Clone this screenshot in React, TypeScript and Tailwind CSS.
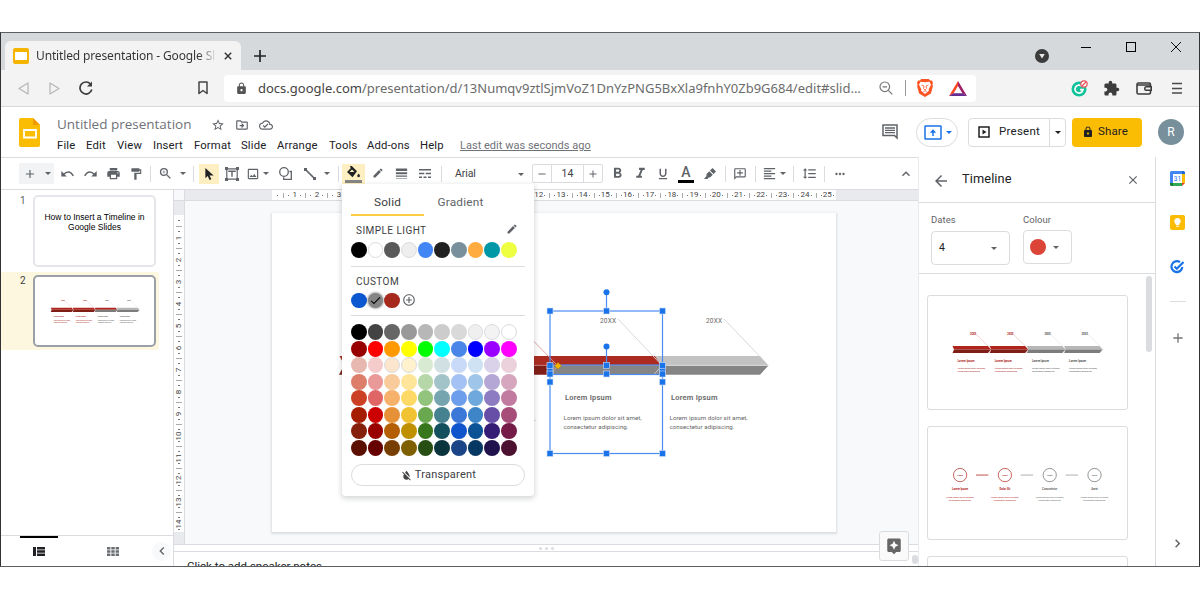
import React from 'react';
import clsx from 'clsx';
import {
    MdAdd,
    MdArrowBack,
    MdAssistant,
    MdCheck,
    MdChevronLeft,
    MdChevronRight,
    MdClose,
    MdEdit,
    MdExtension,
    MdFormatAlignLeft,
    MdFormatBold,
    MdFormatColorReset,
    MdFormatItalic,
    MdFormatLineSpacing,
    MdFormatPaint,
    MdFormatUnderlined,
    MdKeyboardArrowUp,
    MdLightbulb,
    MdLineWeight,
    MdLock,
    MdMoreHoriz,
    MdOutlineAddComment,
    MdOutlineCloudDone,
    MdOutlineDriveFileMove,
    MdOutlineImage,
    MdPrint,
    MdRemove,
    MdStarBorder,
    MdZoomIn,
    MdAddCircleOutline,
} from 'react-icons/md';

type CellProps = { className?: string; children?: React.ReactNode };

// Fixed width slot that centres its icon
function Cell({ className, children }: CellProps) {
    return <div className={clsx('flex shrink-0 items-center justify-center', className)}>{children}</div>;
}

function Divider({ className }: { className: string }) {
    return (
        <Cell className={className}>
            <div className="h-4 w-px bg-[#dadce0]" />
        </Cell>
    );
}

function Caret({ className = 'border-t-[#5f6368]' }: { className?: string }) {
    return <div className={clsx('h-0 w-0 shrink-0 border-x-[3px] border-t-[3px] border-x-transparent', className)} />;
}

/* ---------- Browser chrome ---------- */

function TabStrip() {
    return (
        <div className="flex h-[37px] shrink-0 items-end bg-[#d5d9dc] pl-1 font-['Noto_Sans',sans-serif]">
            <div className="flex h-[29px] w-[236px] items-center rounded-t-md bg-[#f3f3f3] pl-2">
                <div className="flex h-[16px] w-[16px] items-center justify-center rounded-[2px] bg-[#f5b400]">
                    <div className="h-2 w-3 bg-white" />
                </div>
                <div className="ml-[7px] w-[180px] overflow-hidden bg-gradient-to-r from-[#333] from-90% to-[#eee] bg-clip-text text-[12px] tracking-[-0.14px] whitespace-nowrap text-transparent">
                    Untitled presentation - Google Slides
                </div>
                <svg viewBox="0 0 10 10" className="ml-[8px] h-[8px] w-[8px]" stroke="#333" strokeWidth="1.8">
                    <path d="M1 1l8 8M9 1l-8 8" />
                </svg>
            </div>
            <Cell className="h-[29px] w-[38px]">
                <svg viewBox="0 0 12 12" className="h-3 w-3" stroke="#222" strokeWidth="1.7">
                    <path d="M6 0v12M0 6h12" />
                </svg>
            </Cell>
            <div className="flex-1" />
            <Cell className="h-[29px] w-7">
                <svg viewBox="0 0 14 14" className="h-[14px] w-[14px]">
                    <circle cx="7" cy="7" r="7" fill="#3c3c3c" />
                    <path d="M4.2 5h5.6L7 9.6z" fill="#e8e8e8" />
                </svg>
            </Cell>
            <div className="flex h-full w-[143px] items-start pt-2">
                <Cell className="h-3 w-[60px]">
                    <div className="h-px w-[10px] bg-black" />
                </Cell>
                <Cell className="h-3 w-[30px]">
                    <div className="h-[10px] w-[10px] border border-black" />
                </Cell>
                <Cell className="h-3 w-[60px]">
                    <svg viewBox="0 0 10 10" className="h-[10px] w-[10px]" stroke="#111" strokeWidth="1">
                        <path d="M0 0l10 10M10 0L0 10" />
                    </svg>
                </Cell>
            </div>
        </div>
    );
}

function AddressBar() {
    return (
        <div className="flex h-[37px] shrink-0 items-center border-b border-[#d6d8da] bg-[#f3f3f3] font-['Noto_Sans',sans-serif]">
            <Cell className="ml-[10px] w-6">
                <svg viewBox="0 0 11 13" className="h-[13px] w-[11px]" fill="none" stroke="#b5b5b5" strokeWidth="1.2">
                    <path d="M10 1v11L1 6.500z" strokeLinejoin="round" />
                </svg>
            </Cell>
            <Cell className="ml-[7px] w-6">
                <svg viewBox="0 0 11 13" className="h-[13px] w-[11px]" fill="none" stroke="#b5b5b5" strokeWidth="1.2">
                    <path d="M1 1v11l9-5.500z" strokeLinejoin="round" />
                </svg>
            </Cell>
            <Cell className="ml-[8px] w-6">
                <svg viewBox="0 0 14 14" className="h-[14px] w-[14px]" fill="none" stroke="#3c3c3c" strokeWidth="1.7">
                    <path d="M11.500 3A6 6 0 1 0 12.800 8.600" />
                    <path d="M13 0.500v5H8z" fill="#3c3c3c" stroke="none" />
                </svg>
            </Cell>
            <Cell className="ml-[93px] w-6">
                <svg viewBox="0 0 10 14" className="h-[14px] w-[10px]" fill="none" stroke="#444" strokeWidth="1.5">
                    <path d="M1 1h8v11.500L5 9.500l-4 3z" strokeLinejoin="round" />
                </svg>
            </Cell>
            <div className="ml-[9px] flex h-[27px] w-[752px] items-center rounded bg-white">
                <Cell className="ml-[9px] w-4">
                    <MdLock className="text-[13px] text-[#555]" />
                </Cell>
                <div className="mt-[2px] ml-[9px] w-[609px] text-[13px] whitespace-nowrap text-[#6b6b6b]">
                    <span className="text-[#444]">docs.google.com</span>
                    /presentation/d/13Numqv9ztlSjmVoZ1DnYzPNG5BxXla9fnhY0Zb9G684/edit#slid...
                </div>
                <Cell className="ml-[9px] w-5">
                    <svg viewBox="0 0 14 14" className="h-[14px] w-[14px]" fill="none" stroke="#777" strokeWidth="1.200">
                        <circle cx="5.800" cy="5.800" r="4.800" />
                        <path d="M9.300 9.300l4 4M3.600 5.800h4.400" />
                    </svg>
                </Cell>
                <div className="ml-[9px] h-4 w-px bg-[#999]" />
                <Cell className="ml-[9px] w-5">
                    <svg viewBox="0 0 16 18" className="h-[18px] w-4">
                        <path d="M4.300 0h7.400l1.400 1.600 1.900-.2 1 2.600-.6 1.500.5 1.700-2 7.200L8 18l-5.900-3.600-2-7.200.5-1.700L0 4l1-2.600 1.900.2z" fill="#fb5422" />
                        <path d="M8 3.200l4.500-.4 1.500 3-2.300 4.500.2 1.500L8 15l-3.900-3.200.2-1.500L2 5.800l1.500-3z" fill="#fff" />
                        <path d="M4.500 6l2.500 1-.5 2.500L8 11l1.500-1.500L9 7l2.500-1M6.500 12.500l1.500-.8 1.500.8" fill="none" stroke="#fb5422" strokeWidth="0.800" />
                    </svg>
                </Cell>
                <Cell className="ml-[13px] w-5">
                    <svg viewBox="0 0 18 15" className="h-[15px] w-[18px]">
                        <path d="M9 0L0 15l4.500-2.600L9 5z" fill="#ff4724" />
                        <path d="M9 0l9 15-4.500-2.600L9 5z" fill="#9e1f63" />
                        <path d="M0 15h18l-4.500-2.800h-9z" fill="#662d91" />
                    </svg>
                </Cell>
            </div>
            <div className="flex-1" />
            <div className="flex w-[134px] items-center">
                <Cell className="w-7">
                    <svg viewBox="0 0 17 17" className="h-[17px] w-[17px]">
                        <circle cx="8" cy="9" r="7.500" fill="#11c39a" />
                        <path d="M10.800 6.200A4 4 0 1 0 12 9.600H9" fill="none" stroke="#fff" strokeWidth="1.600" />
                        <circle cx="13" cy="4" r="3.200" fill="#fff" stroke="#e8505b" strokeWidth="1.200" />
                        <path d="M11 6l4-4" stroke="#e8505b" strokeWidth="1.200" />
                    </svg>
                </Cell>
                <Cell className="ml-[4px] w-7">
                    <MdExtension className="mt-px text-[17px] text-[#3c3c3c]" />
                </Cell>
                <Cell className="ml-[5px] w-7">
                    <svg viewBox="0 0 16 13" className="h-[13px] w-4" fill="none" stroke="#3c3c3c" strokeWidth="1.600">
                        <path d="M14.500 4V2.500Q14.500 1 13 1H2.500Q1 1 1 2.500v8Q1 12 2.500 12H13q1.500 0 1.500-1.500V9" />
                        <path d="M1 3h13M15.200 4.700H10q-1.200 0-1.200 1.800T10 8.300h5.200z" />
                    </svg>
                </Cell>
                <Cell className="ml-[5px] w-7">
                    <svg viewBox="0 0 10 12" className="h-3 w-[10px]" stroke="#4a4a4a" strokeWidth="1.300">
                        <path d="M0 1.500h10M0 6.500h10M0 11h10" />
                    </svg>
                </Cell>
            </div>
        </div>
    );
}

/* ---------- Document header ---------- */

const menus = [
    { label: 'File', width: 'w-[29px]' },
    { label: 'Edit', width: 'w-[31px]' },
    { label: 'View', width: 'w-[36px]' },
    { label: 'Insert', width: 'w-[41px]' },
    { label: 'Format', width: 'w-[47px]' },
    { label: 'Slide', width: 'w-[36px]' },
    { label: 'Arrange', width: 'w-[52px]' },
    { label: 'Tools', width: 'w-[38px]' },
    { label: 'Add-ons', width: 'w-[53px]' },
    { label: 'Help', width: 'w-[40px]' },
];

function Header() {
    return (
        <div className="flex h-[50px] shrink-0 bg-white">
            <Cell className="ml-[17px] w-[22px]">
                <svg viewBox="0 0 21 29" className="h-[29px] w-[21px]">
                    <path d="M2 0h12l7 7v20q0 2-2 2H2q-2 0-2-2V2q0-2 2-2z" fill="#fbbc04" />
                    <path d="M14 0l7 7h-7z" fill="#f29900" />
                    <path d="M5 12h12v7.500H5z" fill="none" stroke="#fff" strokeWidth="1.800" />
                </svg>
            </Cell>
            <div className="ml-[17px] flex-1">
                <div className="flex h-[30px] items-center pt-[5px]">
                    <div className="w-[150px] font-['Open_Sans',sans-serif] text-[13.5px] whitespace-nowrap text-[#6f7378]">Untitled presentation</div>
                    <Cell className="w-[22px]">
                        <MdStarBorder className="text-[14px] text-[#5f6368]" />
                    </Cell>
                    <Cell className="ml-[2px] w-[22px]">
                        <MdOutlineDriveFileMove className="text-[14px] text-[#5f6368]" />
                    </Cell>
                    <Cell className="ml-[2px] w-[22px]">
                        <MdOutlineCloudDone className="text-[14px] text-[#5f6368]" />
                    </Cell>
                </div>
                <div className="flex h-[19px] items-center text-[11.300px] tracking-[0.15px] whitespace-nowrap text-[#202124]">
                    {menus.map((menu) => (
                        <div key={menu.label} className={menu.width}>
                            {menu.label}
                        </div>
                    ))}
                    <div className="text-[11px] tracking-[0.020px] text-[#6f7378] underline">Last edit was seconds ago</div>
                </div>
            </div>
            <Cell className="w-9">
                <svg viewBox="0 0 16 16" className="h-4 w-4" fill="none" stroke="#5f6368" strokeWidth="1.500">
                    <path d="M1 1h14v13l-2.500-2.500H1z" />
                    <path d="M3 4h10M3 6.300h10M3 8.600h10" strokeWidth="1.300" />
                </svg>
            </Cell>
            <div className="ml-2 flex items-center">
                <div className="flex h-[29px] w-[42px] items-center justify-center gap-1 rounded-full border border-[#dadce0] pl-1">
                    <svg viewBox="0 0 18 15" className="h-[15px] w-[18px] shrink-0" fill="none" stroke="#1a73e8" strokeWidth="1.500">
                        <rect x="1" y="1" width="16" height="13" rx="0.500" />
                        <path d="M9 11V5" />
                        <path d="M5.800 7.800L9 4.300l3.200 3.500z" fill="#1a73e8" stroke="none" />
                    </svg>
                    <Caret className="mr-[2px] border-t-[#1a73e8]" />
                </div>
                <div className="ml-[10px] flex h-[29px] w-[98px] items-center rounded border border-[#dadce0] text-[11.500px] text-[#202124]">
                    <svg viewBox="0 0 12 12" className="ml-[9px] h-3 w-3" fill="none" stroke="#202124" strokeWidth="1.500">
                        <rect x="1" y="1" width="10" height="10" />
                        <path d="M4.500 3.500v5l4-2.500z" fill="#202124" stroke="none" />
                    </svg>
                    <div className="ml-[9px] w-[50px] tracking-[0.25px]">Present</div>
                    <div className="flex h-full flex-1 items-center justify-center border-l border-[#dadce0]">
                        <Caret className="border-t-[#202124]" />
                    </div>
                </div>
                <div className="ml-[6px] flex h-[29px] w-[70px] items-center rounded bg-[#fbbc04] text-[11.500px] text-[#202124]">
                    <MdLock className="ml-[10px] text-[12px]" />
                    <div className="ml-[4px] tracking-[0.15px]">Share</div>
                </div>
                <div className="mr-[15px] ml-4 flex h-[26px] w-[26px] items-center justify-center rounded-full bg-[#78909c] text-[12px] text-white">R</div>
            </div>
        </div>
    );
}

/* ---------- Toolbar ---------- */

function Toolbar() {
    return (
        <div className="flex h-[33px] shrink-0 items-center border-y border-[#dadce0] bg-white text-[15px] text-[#5f6368]">
            <div className="ml-[18px] flex h-[21px] w-[35px] items-center bg-[#f1f3f4]">
                <Cell className="w-[22px]">
                    <MdAdd className="text-[14px]" />
                </Cell>
                <Cell className="w-[13px]">
                    <Caret />
                </Cell>
            </div>
            <Cell className="ml-[2px] w-[23px]">
                <svg viewBox="0 0 13 8" className="h-2 w-[13px]" fill="none" stroke="#5f6368" strokeWidth="1.500">
                    <path d="M2.500 4.300Q8.500-1 12.300 5.800" />
                    <path d="M0.300 1v5.500h5.500z" fill="#5f6368" stroke="none" />
                </svg>
            </Cell>
            <Cell className="w-[23px]">
                <svg viewBox="0 0 13 8" className="h-2 w-[13px]" fill="none" stroke="#5f6368" strokeWidth="1.500">
                    <path d="M10.500 4.300Q4.500-1 0.700 5.800" />
                    <path d="M12.700 1v5.500H7.200z" fill="#5f6368" stroke="none" />
                </svg>
            </Cell>
            <Cell className="w-[22px]">
                <MdPrint />
            </Cell>
            <Cell className="w-6">
                <MdFormatPaint className="text-[14px]" />
            </Cell>
            <Divider className="w-1" />
            <Cell className="w-[26px]">
                <MdZoomIn />
            </Cell>
            <Cell className="w-[10px]">
                <Caret />
            </Cell>
            <Divider className="w-[11px]" />
            <Cell className="h-5 w-5 bg-[#feefc3]">
                <svg viewBox="0 0 9 13" className="h-[12px] w-[9px]" fill="#202124">
                    <path d="M0 0v11l2.600-2.300L4.500 13l2-.9-1.900-4L9 8z" />
                </svg>
            </Cell>
            <Cell className="w-[25px]">
                <svg viewBox="0 0 14 14" className="h-[14px] w-[14px]" fill="none" stroke="#5f6368" strokeWidth="1.200">
                    <path d="M1.800 1.800h10.400v10.400H1.800z" />
                    <path d="M4 5V4.300h6V5M7 4.300v5.500" strokeWidth="1.400" />
                    <path d="M0 0h3v3H0zM11 0h3v3h-3zM0 11h3v3H0zM11 11h3v3h-3z" fill="#5f6368" stroke="none" />
                </svg>
            </Cell>
            <Cell className="w-[18px]">
                <MdOutlineImage className="text-[14px]" />
            </Cell>
            <Cell className="w-2">
                <Caret />
            </Cell>
            <Cell className="w-[30px]">
                <svg viewBox="0 0 13 13" className="h-[13px] w-[13px]" fill="none" stroke="#5f6368" strokeWidth="1.300">
                    <circle cx="5" cy="5" r="4.300" />
                    <path d="M10.500 4.500h1.800v7.800H4.700v-2" />
                </svg>
            </Cell>
            <Cell className="w-5">
                <svg viewBox="0 0 12 12" className="h-3 w-3" stroke="#5f6368" strokeWidth="1.700">
                    <path d="M1.500 1.500l9 9" />
                    <path d="M0 0h3v3H0zM9 9h3v3H9z" fill="#5f6368" stroke="none" />
                </svg>
            </Cell>
            <Cell className="w-[14px]">
                <Caret />
            </Cell>
            <Divider className="w-2" />
            <Cell className="h-5 w-[23px] flex-col bg-[#feefc3]">
                <svg viewBox="0 0 13 12" className="mt-px h-3 w-[13px]" fill="#202124">
                    <path d="M3 0l1-.8 6 6L5.500 11.200 0 6l3.700-3.800zM11.600 7.500q1.400 1.700 1.400 2.500t-1.400 1.200Q10.200 10.800 10.200 10t1.400-2.500z" />
                    <path d="M5 3.500L2.500 6h5z" fill="#feefc3" />
                </svg>
                <div className="mt-[2px] h-[3px] w-[17px] bg-[#858585]" />
            </Cell>
            <Cell className="w-[26px]">
                <MdEdit className="mb-[2px] text-[12px]" />
            </Cell>
            <Cell className="w-5">
                <MdLineWeight />
            </Cell>
            <Cell className="w-7">
                <svg viewBox="0 0 12 9" className="h-[9px] w-3" fill="#5f6368">
                    <path d="M0 0h12v1.500H0zM0 3.800h5.300v1.500H0zM6.700 3.800H12v1.500H6.700zM0 7.500h3V9H0zM4.500 7.500h3V9h-3zM9 7.500h3V9H9z" />
                </svg>
            </Cell>
            <Divider className="w-[5px]" />
            <div className="flex w-[88px] items-center justify-between pt-px pr-2 pl-[11px] text-[10.500px] text-[#3c4043]">
                <span className="tracking-[-0.1px]">Arial</span>
                <Caret />
            </div>
            <div className="flex h-[19px] w-[71px] items-center rounded-[2px] border border-[#dadce0]">
                <Cell className="w-[18px]">
                    <MdRemove className="text-[12px]" />
                </Cell>
                <Cell className="h-full w-[33px] border-x border-[#dadce0] pt-px text-[10.500px] text-[#3c4043]">14</Cell>
                <Cell className="w-[18px]">
                    <MdAdd className="text-[12px]" />
                </Cell>
            </div>
            <Cell className="w-7">
                <MdFormatBold className="text-[17px]" />
            </Cell>
            <Cell className="w-[18px]">
                <MdFormatItalic className="text-[17px]" />
            </Cell>
            <Cell className="w-7">
                <MdFormatUnderlined className="mt-px text-[14px]" />
            </Cell>
            <Cell className="w-[18px] flex-col">
                <span className="text-[14px] leading-[15px] font-medium">A</span>
                <div className="h-[3px] w-4 bg-black" />
            </Cell>
            <Cell className="w-[30px]">
                <svg viewBox="0 0 12 12" className="h-3 w-3" fill="#5f6368">
                    <path d="M8.500 0L12 3.500 9.500 6 6 2.500zM5.300 3.200l3.500 3.500L6 9.500H4.500L3.500 11H0l2.500-3V6z" />
                </svg>
            </Cell>
            <div className="h-4 w-px bg-[#dadce0]" />
            <Cell className="w-7">
                <MdOutlineAddComment className="-scale-x-100 text-[14px]" />
            </Cell>
            <Divider className="w-[3px]" />
            <Cell className="w-6">
                <MdFormatAlignLeft />
            </Cell>
            <Cell className="w-1">
                <Caret />
            </Cell>
            <Divider className="w-4" />
            <Cell className="w-4">
                <MdFormatLineSpacing />
            </Cell>
            <Divider className="w-[14px]" />
            <Cell className="w-[18px]">
                <MdMoreHoriz className="text-[14px]" />
            </Cell>
            <div className="flex-1" />
            <Cell className="w-[25px]">
                <MdKeyboardArrowUp className="mt-px text-[16px]" />
            </Cell>
        </div>
    );
}

/* ---------- Timeline drawings ---------- */

const RED = '#b0241b';
const DARK_RED = '#7f1d17';

function MiniTimeline({ viewBox, className, thirdActive }: { viewBox: string; className: string; thirdActive?: boolean }) {
    return (
        <svg viewBox={viewBox} className={className}>
            {[0, 1, 2, 3].map((i) => {
                const x = 27 + i * 37.2;
                const red = i < 2;
                return (
                    <g key={i}>
                        <path d={`M${x - 1.5} 51h35.500l3 3.500H${x}z`} fill={red || (thirdActive && i === 2) ? RED : '#b7b7b7'} />
                        <path d={`M${x} 54.500h37l-3 3.500H${x - 1.5}z`} fill={red ? DARK_RED : '#7c7c7c'} />
                        <path d={`M${x + 22} 39l15.500 15.500-3 3.500`} fill="none" stroke={red ? '#e3aaa6' : '#d9d9d9'} strokeWidth="0.500" />
                        <g fill={red ? RED : '#555'}>
                            <text x={x + 16} y="39.500" fontSize="2.600" fontWeight="bold">20XX</text>
                            <text x={x + 3.5} y="66.500" fontSize="2.900" fontWeight="bold" textLength="17">Lorem Ipsum</text>
                            <text x={x + 3.5} y="74" fontSize="2.400" textLength="28">Lorem ipsum dolor sit amet,</text>
                            <text x={x + 3.5} y="77" fontSize="2.400" textLength="23">consectetur adipiscing.</text>
                        </g>
                    </g>
                );
            })}
        </svg>
    );
}

function CircleTimeline() {
    const labels = ['Lorem Ipsum', 'Dolor Sit', 'Consectetur', 'Amet'];
    return (
        <svg viewBox="0 0 200 113" className="h-full w-full">
            {labels.map((label, i) => {
                const x = 32 + i * 45.2;
                const color = i < 2 ? RED : '#666';
                return (
                    <g key={label} fill={color} textAnchor="middle">
                        <circle cx={x} cy="48.500" r="6.700" fill="none" stroke={color} strokeWidth="0.700" />
                        <text x={x} y="49.800" fontSize="2.300" fontWeight="bold">20XX</text>
                        {i < 3 && <path d={`M${x + 16} 48.500h12.500`} stroke={i < 1 ? RED : '#999'} strokeWidth="0.800" />}
                        <text x={x} y="64" fontSize="2.800" fontWeight="bold">{label}</text>
                        <text x={x} y="72" fontSize="2.400" textLength="28">Lorem ipsum dolor sit amet,</text>
                        <text x={x} y="75" fontSize="2.400" textLength="23">consectetur adipiscing.</text>
                    </g>
                );
            })}
        </svg>
    );
}

const handles = [
    [550, 311], [606.5, 311], [662.5, 311],
    [550, 370], [662.5, 370],
    [550, 365.5], [606.5, 365.5], [662.5, 365.5],
    [550, 374], [606.5, 374], [662.5, 374],
    [550, 382], [662.5, 382],
    [550, 453.5], [606.5, 453.5], [662.5, 453.5],
];

function SlideDrawing() {
    return (
        <svg viewBox="272 213 564 319" className="h-[319px] w-[564px]">
            <path d="M339 356h316l7 9.500H344z" fill="#ab2b20" />
            <path d="M344 365.500h206v9.300H339z" fill={DARK_RED} />
            <path d="M339 356l5 9.500" stroke="#fff" />
            <path d="M655 356h105l8.500 9.500H662z" fill="#c2c2c2" />
            <path d="M550 365.500h218.500l-8.500 9.300H550z" fill="#858585" />
            <path d="M662 365.300h106" stroke="#ececec" strokeWidth="0.700" />
            <path d="M344 365.300h206" stroke="#d48d88" strokeWidth="0.700" />
            <path d="M512 319l46 47-8 8" fill="none" stroke="#dc9a96" strokeWidth="0.900" />
            <path d="M618 319l44 46.500-8 9M724 319l44 46" fill="none" stroke="#d4d4d4" strokeWidth="0.900" />
            {[0, 106].map((dx) => (
                <g key={dx} fill="#666">
                    <text x={600 + dx} y="323" fontSize="6.500" textLength="16">20XX</text>
                    <text x={565 + dx} y="399.500" fontSize="7.500" fontWeight="600" textLength="46.500">Lorem Ipsum</text>
                    <text x={563.5 + dx} y="420" fontSize="6.200" textLength="78">Lorem ipsum dolor sit amet,</text>
                    <text x={563.5 + dx} y="429" fontSize="6.200" textLength="65">consectetur adipiscing.</text>
                </g>
            ))}
            <text x="458" y="420.500" fontSize="6.200" fill={RED} textLength="78">Lorem ipsum dolor sit amet.</text>
            {/* selection frames */}
            <g fill="none" stroke="#4a8df0" strokeWidth="1.200">
                <rect x="550" y="311" width="112.500" height="142.500" />
                <rect x="550" y="365" width="112.500" height="9.500" />
                <path d="M606.500 293v18M606.500 347v18" />
            </g>
            <circle cx="606.500" cy="292.300" r="3" fill="#1a73e8" />
            <circle cx="606.500" cy="346.500" r="3" fill="#1a73e8" />
            {handles.map(([x, y]) => (
                <rect key={`${x}-${y}`} x={x - 3} y={y - 3} width="6" height="6" fill="#1a73e8" stroke="#cfe0fb" strokeWidth="0.600" />
            ))}
            <path d="M558 362.500l3.300 3.300-3.300 3.300-3.300-3.300z" fill="#f5b400" stroke="#b98700" strokeWidth="0.500" />
        </svg>
    );
}

/* ---------- Editor area ---------- */

function Filmstrip() {
    return (
        <div className="flex w-[173px] shrink-0 flex-col border-r border-[#dadce0] bg-white">
            <div className="flex-1">
                <div className="flex pt-[5px]">
                    <div className="w-8 pl-[19px] text-[10px] leading-[11px] text-[#5f6368]">1</div>
                    <div className="flex h-[72px] w-[123px] flex-col items-center rounded-[5px] border-2 border-[#e4e6ea] pt-[15px] font-['Liberation_Sans',Arial,sans-serif] text-[8.500px] leading-[10px] whitespace-nowrap text-black">
                        <div>How to Insert a Timeline in</div>
                        <div>Google Slides</div>
                    </div>
                </div>
                <div className="mt-[5px] flex h-[78px] w-[158px] rounded-r-[3px] bg-[#fef7e0] pt-[3px]">
                    <div className="w-8 pl-[19px] text-[10px] leading-[12px] text-[#3c4043]">2</div>
                    <div className="h-[72px] w-[123px] overflow-hidden rounded-[5px] border-2 border-[#9aa0a6] bg-white">
                        <MiniTimeline viewBox="-1 -1 201 115" className="h-full w-full" thirdActive />
                    </div>
                </div>
            </div>
            <div className="flex h-[31px] items-center border-t border-[#dadce0]">
                <div className="ml-[19px] flex h-full w-[38px] justify-center border-t-2 border-black pt-[9px]">
                    <svg viewBox="0 0 12 9" className="h-[9px] w-3" fill="#202124">
                        <path d="M0 0h3v9H0zM4 0h8v2.400H4zM4 3.300h8v2.400H4zM4 6.600h8V9H4z" />
                    </svg>
                </div>
                <Cell className="ml-[39px] w-8">
                    <svg viewBox="0 0 12 9" className="h-[9px] w-3" fill="#6b6f73">
                        <path d="M0 0h3.400v2.500H0zM4.300 0h3.400v2.500H4.300zM8.600 0H12v2.500H8.600zM0 3.250h3.400v2.500H0zM4.300 3.250h3.400v2.500H4.300zM8.600 3.250H12v2.500H8.600zM0 6.500h3.400V9H0zM4.300 6.500h3.400V9H4.300zM8.600 6.500H12V9H8.600z" />
                    </svg>
                </Cell>
                <Cell className="ml-[23px] h-[19px] w-[19px] rounded-full bg-[#f8f9fa]">
                    <MdChevronLeft className="text-[16px] text-[#5f6368]" />
                </Cell>
            </div>
        </div>
    );
}

function HorizontalRuler() {
    return (
        <div className="flex h-[11px] shrink-0 border-b border-[#dadce0] text-[8px] leading-[10px] text-[#444]">
            <div className="w-[11px] border-r border-[#dadce0] bg-[#f8f9fa]" />
            <div className="w-[87px] bg-[#e8eaed]" />
            <div className="flex w-[564px] overflow-hidden bg-white">
                <Cell className="w-[11.100px]">
                    <div className="h-px w-px bg-[#777]" />
                </Cell>
                {Array.from({ length: 25 }, (_, i) => (
                    <div key={i} className="flex w-[22.200px] shrink-0 items-center">
                        <div className="h-[5px] w-px bg-[#aaa]" />
                        <div className="flex flex-1 items-center justify-between px-1">
                            <div className="h-px w-px bg-[#777]" />
                            {i + 1}
                            <div className="h-px w-px bg-[#777]" />
                        </div>
                    </div>
                ))}
            </div>
            <div className="flex-1 bg-[#e8eaed]" />
        </div>
    );
}

function VerticalRuler() {
    return (
        <div className="flex w-[11px] shrink-0 flex-col border-r border-[#dadce0] text-[8px] leading-[8px] text-[#444]">
            <div className="h-[14px] shrink-0 bg-[#e8eaed]" />
            <div className="flex h-[317px] shrink-0 flex-col overflow-hidden bg-white">
                <Cell className="h-[11px]">
                    <div className="h-px w-[2px] bg-[#777]" />
                </Cell>
                {Array.from({ length: 14 }, (_, i) => (
                    <div key={i} className="flex h-[22.040px] shrink-0 flex-col items-center">
                        <div className="h-px w-[6px] bg-[#aaa]" />
                        <div className="flex flex-1 flex-col items-center justify-between py-1">
                            <div className="h-px w-[2px] bg-[#777]" />
                            <Cell className="h-1 w-2 -rotate-90">{i + 1}</Cell>
                            <div className="h-px w-[2px] bg-[#777]" />
                        </div>
                    </div>
                ))}
            </div>
            <div className="flex-1 bg-[#e8eaed]" />
        </div>
    );
}

function Canvas() {
    return (
        <div className="flex min-w-0 flex-1 flex-col">
            <HorizontalRuler />
            <div className="flex h-[343px] shrink-0">
                <VerticalRuler />
                <div className="flex-1 bg-[#f8f9fa] pt-3 pl-[87px]">
                    <div className="h-[319px] w-[564px] bg-white shadow-[0_1px_2px_1px_rgba(60,64,67,0.15)]">
                        <SlideDrawing />
                    </div>
                </div>
            </div>
            <div className="flex h-2 shrink-0 items-center justify-center gap-[3px] border-y border-[#dadce0] bg-white">
                <div className="h-[3px] w-[3px] rounded-full bg-[#dadce0]" />
                <div className="h-[3px] w-[3px] rounded-full bg-[#dadce0]" />
                <div className="h-[3px] w-[3px] rounded-full bg-[#dadce0]" />
            </div>
            <div className="flex min-h-0 flex-1 justify-between overflow-hidden bg-white pl-[13px]">
                <div className="pt-[8px] text-[11.500px] leading-[12px] whitespace-nowrap text-[#202124]">Click to add speaker notes</div>
                <div className="mt-[3px] h-[9px] w-[6px] rounded-full bg-[#dadce0]" />
            </div>
        </div>
    );
}

/* ---------- Fill colour menu ---------- */

const themeColors = [
    'bg-black', 'bg-white border border-[#dadce0]', 'bg-[#595959]', 'bg-[#eeeeee] border border-[#dadce0]', 'bg-[#4285f4]',
    'bg-[#212121]', 'bg-[#78909c]', 'bg-[#ffab40]', 'bg-[#0097a7]', 'bg-[#eeff41]',
];

const palette = [
    'bg-[#000000]', 'bg-[#434343]', 'bg-[#666666]', 'bg-[#999999]', 'bg-[#b7b7b7]', 'bg-[#cccccc]', 'bg-[#d9d9d9]', 'bg-[#efefef] border border-[#dadce0]', 'bg-[#f3f3f3] border border-[#dadce0]', 'bg-[#ffffff] border border-[#dadce0]',
    'bg-[#980000]', 'bg-[#ff0000]', 'bg-[#ff9900]', 'bg-[#ffff00]', 'bg-[#00ff00]', 'bg-[#00ffff]', 'bg-[#4a86e8]', 'bg-[#0000ff]', 'bg-[#9900ff]', 'bg-[#ff00ff]',
    'bg-[#e6b8af]', 'bg-[#f4cccc]', 'bg-[#fce5cd] border border-[#dadce0]', 'bg-[#fff2cc] border border-[#dadce0]', 'bg-[#d9ead3]', 'bg-[#d0e0e3]', 'bg-[#c9daf8]', 'bg-[#cfe2f3]', 'bg-[#d9d2e9]', 'bg-[#ead1dc]',
    'bg-[#dd7e6b]', 'bg-[#ea9999]', 'bg-[#f9cb9c]', 'bg-[#ffe599]', 'bg-[#b6d7a8]', 'bg-[#a2c4c9]', 'bg-[#a4c2f4]', 'bg-[#9fc5e8]', 'bg-[#b4a7d6]', 'bg-[#d5a6bd]',
    'bg-[#cc4125]', 'bg-[#e06666]', 'bg-[#f6b26b]', 'bg-[#ffd966]', 'bg-[#93c47d]', 'bg-[#76a5af]', 'bg-[#6d9eeb]', 'bg-[#6fa8dc]', 'bg-[#8e7cc3]', 'bg-[#c27ba0]',
    'bg-[#a61c00]', 'bg-[#cc0000]', 'bg-[#e69138]', 'bg-[#f1c232]', 'bg-[#6aa84f]', 'bg-[#45818e]', 'bg-[#3c78d8]', 'bg-[#3d85c6]', 'bg-[#674ea7]', 'bg-[#a64d79]',
    'bg-[#85200c]', 'bg-[#990000]', 'bg-[#b45f06]', 'bg-[#bf9000]', 'bg-[#38761d]', 'bg-[#134f5c]', 'bg-[#1155cc]', 'bg-[#0b5394]', 'bg-[#351c75]', 'bg-[#741b47]',
    'bg-[#5b0f00]', 'bg-[#660000]', 'bg-[#783f04]', 'bg-[#7f6000]', 'bg-[#274e13]', 'bg-[#0c343d]', 'bg-[#1c4587]', 'bg-[#073763]', 'bg-[#20124d]', 'bg-[#4c1130]',
];

function Swatches({ colors }: { colors: string[] }) {
    return (
        <div className="grid w-[166.500px] auto-rows-[16.500px] grid-cols-10">
            {colors.map((color) => (
                <div key={color} className={clsx('h-[15.800px] w-[15.800px] rounded-full', color)} />
            ))}
        </div>
    );
}

function ColorMenu() {
    return (
        <div className="absolute top-[151px] left-[341px] flex h-[312px] w-[192px] flex-col rounded-b bg-white px-[9px] shadow-[0_2px_5px_1px_rgba(60,64,67,0.2)]">
            <div className="flex h-8 shrink-0 text-[11.800px] leading-[11px] text-[#3c4043]">
                <div className="flex w-[73px] items-end justify-center border-b-2 border-[#fbcb43] pb-[6px] tracking-[0.2px]">Solid</div>
                <div className="flex w-[73px] items-end justify-center pb-[8px] tracking-[0.2px] text-[#5f6368]">Gradient</div>
            </div>
            <div className="flex h-[26px] shrink-0 items-center justify-between pr-[7px] pl-[5px] text-[10px] tracking-[0.45px] text-[#3c4043]">
                <span className="pt-[2px]">SIMPLE LIGHT</span>
                <MdEdit className="mb-px text-[12px] text-[#5f6368]" />
            </div>
            <Swatches colors={themeColors} />
            <div className="mt-[7px] h-px shrink-0 bg-[#dadce0]" />
            <div className="flex h-[26px] shrink-0 items-center pt-[3px] pl-[5px] text-[10px] tracking-[0.45px] text-[#3c4043]">CUSTOM</div>
            <div className="flex shrink-0 items-center gap-[0.850px]">
                <div className="h-[15.800px] w-[15.800px] rounded-full bg-[#0b57d0]" />
                <div className="flex h-[15.800px] w-[15.800px] items-center justify-center rounded-full bg-[#858585] shadow-[0_0_2px_1px_rgba(0,0,0,0.3)]">
                    <MdCheck className="text-[13px] text-black" />
                </div>
                <div className="h-[15.800px] w-[15.800px] rounded-full bg-[#a6291e]" />
                <MdAddCircleOutline className="mb-px ml-[1px] text-[14px] text-[#5f6368]" />
            </div>
            <div className="mt-[7px] mb-[8px] h-px shrink-0 bg-[#dadce0]" />
            <Swatches colors={palette} />
            <div className="mt-[8px] flex h-[22px] shrink-0 items-center justify-center gap-[2px] rounded-full border border-[#dadce0] text-[11px] tracking-[0.25px] text-[#3c4043]">
                <MdFormatColorReset className="mt-px text-[13px] text-[#444]" />
                Transparent
            </div>
        </div>
    );
}

/* ---------- Right side ---------- */

function TimelinePanel() {
    return (
        <div className="flex w-[236px] shrink-0 flex-col bg-white">
            <div className="flex h-[46px] shrink-0 items-center border-b border-[#dadce0]">
                <Cell className="ml-[12px] w-5">
                    <MdArrowBack className="mt-[2px] text-[18px] text-[#5f6368]" />
                </Cell>
                <div className="ml-[11px] w-[150px] pb-[2px] text-[12.800px] tracking-[0.1px] text-[#202124]">Timeline</div>
                <Cell className="ml-[11px] w-5">
                    <MdClose className="mt-px text-[14px] text-[#5f6368]" />
                </Cell>
            </div>
            <div className="flex h-[71px] shrink-0 gap-[13px] border-b border-[#dadce0] pt-[9px] pl-3">
                <div className="w-[79px]">
                    <div className="text-[9.500px] leading-[15px] tracking-[0.05px] text-[#5f6368]">Dates</div>
                    <div className="mt-[4px] flex h-[34px] items-center justify-between rounded border border-[#dadce0] pr-3 pl-[7px] text-[10.500px] text-[#202124]">
                        4
                        <Caret />
                    </div>
                </div>
                <div className="w-[49px]">
                    <div className="text-[9.500px] leading-[15px] tracking-[0.05px] text-[#5f6368]">Colour</div>
                    <div className="mt-[3px] flex h-[34px] items-center gap-[7px] rounded border border-[#dadce0] pl-[6px]">
                        <div className="h-4 w-4 rounded-full bg-[#db4437]" />
                        <Caret />
                    </div>
                </div>
            </div>
            <div className="flex min-h-0 flex-1 justify-between overflow-hidden">
                <div className="flex flex-col gap-4 pt-[21px] pl-2">
                    <div className="h-[115px] w-[201px] shrink-0 rounded-[3px] border border-[#dadce0]">
                        <MiniTimeline viewBox="1 1 199 113" className="h-full w-full" />
                    </div>
                    <div className="h-[114px] w-[201px] shrink-0 rounded-[3px] border border-[#dadce0]">
                        <CircleTimeline />
                    </div>
                    <div className="h-[115px] w-[201px] shrink-0 rounded-[3px] border border-[#dadce0]" />
                </div>
                <div className="mt-[2px] mr-[3px] h-[76px] w-[6px] rounded-full bg-[#dadce0]" />
            </div>
        </div>
    );
}

function SideRail() {
    return (
        <div className="flex flex-1 flex-col items-center border-l border-[#dadce0] bg-white pt-[14px]">
            <svg viewBox="0 0 15 15" className="h-[15px] w-[15px] shrink-0">
                <path d="M0 1.500Q0 0 1.500 0H12v3H3v9H0z" fill="#4285f4" />
                <path d="M12 0h1.500Q15 0 15 1.500V3h-3z" fill="#1967d2" />
                <path d="M12 3h3v9h-3z" fill="#fbbc04" />
                <path d="M3 12h9v3H3z" fill="#34a853" />
                <path d="M0 12h3v3H1.500Q0 15 0 13.500z" fill="#188038" />
                <path d="M12 12h3l-3 3z" fill="#ea4335" />
                <text x="7.500" y="9.900" fontSize="6.500" fill="#1a73e8" textAnchor="middle">31</text>
            </svg>
            <Cell className="mt-[29px] h-[15px] w-[15px] rounded-[2px] bg-[#fbbc04]">
                <MdLightbulb className="text-[11px] text-white" />
            </Cell>
            <svg viewBox="0 0 15 14" className="mt-[30px] h-[14px] w-[15px] shrink-0" fill="none" stroke="#1a73e8" strokeWidth="2.200">
                <path d="M10 2.200A5.400 5.400 0 1 0 12.300 7" />
                <path d="M4.500 6.500l2.300 2.300L13.500 2" />
            </svg>
            <div className="mt-[27px] h-px w-4 shrink-0 bg-[#dadce0]" />
            <MdAdd className="mt-7 shrink-0 text-[16px] text-[#777]" />
            <div className="flex-1" />
            <MdChevronRight className="mb-[14px] text-[17px] text-[#5f6368]" />
        </div>
    );
}

export default function App() {
    return (
        <div className="h-[600px] w-[1200px] overflow-hidden bg-white pt-8 font-['Roboto',sans-serif]">
            <div className="relative flex h-[535px] flex-col border border-[#5c5f61] border-r-[#333] border-l-[#333]">
                <TabStrip />
                <AddressBar />
                <Header />
                <div className="flex min-h-0 flex-1">
                    <div className="flex w-[918px] shrink-0 flex-col border-r border-[#e8eaed]">
                        <Toolbar />
                        <div className="flex min-h-0 flex-1">
                            <Filmstrip />
                            <Canvas />
                        </div>
                    </div>
                    <TimelinePanel />
                    <SideRail />
                </div>
                <ColorMenu />
                {/* Explore button floats over the canvas corner */}
                <div className="absolute top-[498px] left-[878px] flex h-[30px] w-[30px] items-center justify-center rounded-[3px] border border-[#dadce0] bg-[#fafafa]">
                    <MdAssistant className="text-[18px] text-[#666]" />
                </div>
            </div>
        </div>
    );
}
